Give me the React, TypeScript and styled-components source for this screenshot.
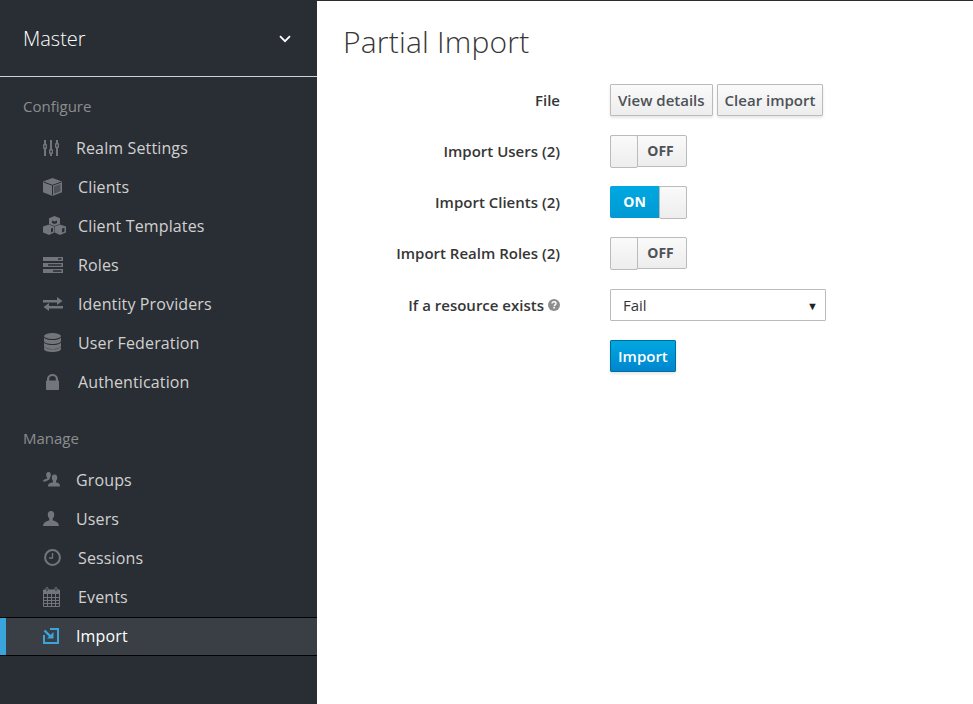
import React from 'react'
import styled, { createGlobalStyle } from 'styled-components'

const GlobalStyle = createGlobalStyle`
  html, body {
    margin: 0;
    padding: 0;
    height: 100%;
    background: #fff;
    font-family: 'Open Sans', 'Liberation Sans', sans-serif;
  }
  * { box-sizing: border-box; }
`

const iconColor = '#72767b'
const sidebarColor = '#292e34'

const SlidersIcon = () => (
  <svg width='16' height='16' viewBox='0 0 16 16' fill={iconColor}>
    <rect x='1' y='0' width='2' height='16' />
    <rect x='7' y='0' width='2' height='16' />
    <rect x='13' y='0' width='2' height='16' />
    <rect x='0' y='4' width='4' height='5' rx='1' />
    <rect x='6' y='9' width='4' height='5' rx='1' />
    <rect x='12' y='3' width='4' height='5' rx='1' />
    <rect x='1.300' y='5.500' width='1.400' height='2' fill={sidebarColor} />
    <rect x='7.300' y='10.500' width='1.400' height='2' fill={sidebarColor} />
    <rect x='13.300' y='4.500' width='1.400' height='2' fill={sidebarColor} />
  </svg>
)

const CubeIcon = () => (
  <svg width='19' height='18' viewBox='0 0 19 18'>
    <path d='M9.500 0 19 3.500V14.300L9.500 18 0 14.300V3.500Z' fill={iconColor} />
    <path d='M.5 4 9.500 7.300 18.500 4M9.500 7.300V17.500' fill='none' stroke={sidebarColor} strokeWidth='1' />
    <path d='M11 8.500 17.500 6V13.300L11 15.800Z' fill='#4d5258' />
  </svg>
)

const CubesIcon = () => (
  <svg width='23' height='19' viewBox='0 0 23 19' fill={iconColor}>
    <path d='M11.500 0 17 2.200V8L11.500 10 6 8V2.200Z' />
    <path d='M6 8.500 11.300 10.600V16.600L6 19 0 16.600V10.600Z' />
    <path d='M17 8.500 23 10.600V16.600L17 19 11.700 16.600V10.600Z' />
    <path d='M9 4.500 11.500 5.400 14 4.500V7L11.500 8 9 7Z' fill={sidebarColor} />
    <path d='M8 12.500 10 11.700V15.500L8 16.400Z' fill={sidebarColor} />
    <path d='M19 12.500 21.500 11.700V15.500L19 16.400Z' fill={sidebarColor} />
  </svg>
)

const ServerIcon = () => (
  <svg width='20' height='16' viewBox='0 0 20 16' fill={iconColor}>
    <path fillRule='evenodd' d='M0 0H20V4H0ZM15 1.300V2.700H18.500V1.300Z' />
    <path fillRule='evenodd' d='M0 6H20V10H0ZM5 7.300V8.700H18.500V7.300Z' />
    <path fillRule='evenodd' d='M0 12H20V16H0ZM10 13.300V14.700H18.500V13.300Z' />
  </svg>
)

const ExchangeIcon = () => (
  <svg width='20' height='14' viewBox='0 0 20 14' fill={iconColor}>
    <path d='M0 3H14V0L19.500 4 14 8V5.500H0Z' />
    <path d='M20 9H6V6L.5 10 6 14V11.500H20Z' />
  </svg>
)

const DatabaseIcon = () => (
  <svg width='17' height='19' viewBox='0 0 17 19' fill={iconColor}>
    <ellipse cx='8.500' cy='3' rx='8.500' ry='3' />
    <path d='M0 4.700C1.500 6.300 5 7 8.500 7S15.500 6.300 17 4.700V8C17 9.700 13.200 11 8.500 11S0 9.700 0 8Z' />
    <path d='M0 9.700C1.500 11.300 5 12 8.500 12S15.500 11.300 17 9.700V13C17 14.700 13.200 16 8.500 16S0 14.700 0 13Z' />
    <path d='M0 13.900C1.500 15.500 5 16.300 8.500 16.300S15.500 15.500 17 13.900V16C17 17.700 13.200 19 8.500 19S0 17.700 0 16Z' />
  </svg>
)

const LockIcon = () => (
  <svg width='13' height='16' viewBox='0 0 13 16' fill={iconColor}>
    <path fillRule='evenodd' d='M1 6.500V5A5.500 5 0 0 1 12 5V6.500H12.200A.8.8 0 0 1 13 7.300V15.200A.8.8 0 0 1 12.200 16H.8A.8.8 0 0 1 0 15.200V7.300A.8.8 0 0 1 .8 6.500ZM3.200 6.500H9.800V5A3.300 3 0 0 0 3.200 5Z' />
  </svg>
)

const GroupIcon = () => (
  <svg width='17' height='15' viewBox='0 0 17 15' fill={iconColor}>
    <path d='M5.500 0C7.300 0 8 1.500 7.800 3.200 7.700 4.500 7.200 5.300 6.700 5.900V7.200L5 8.300 2.500 9.600H0C0 8 .8 7.500 2.500 7L4.200 6.400V5.800C3.600 5.200 3.300 4.400 3.200 3.200 3 1.500 3.700 0 5.500 0Z' />
    <path d='M11.500 2.500C13.500 2.500 14.400 4 14.200 5.900 14.100 7.300 13.600 8.200 13 8.800V10.200L15 11C16.500 11.600 17 12.600 17 14.500H5C5 12.600 5.700 11.600 7.200 11L10 10.200V8.800C9.400 8.200 8.900 7.300 8.800 5.900 8.600 4 9.500 2.500 11.500 2.500Z' />
  </svg>
)

const UserIcon = () => (
  <svg width='16' height='15' viewBox='0 0 16 15' fill={iconColor}>
    <path d='M8 0C10.400 0 11.500 1.800 11.200 4 11 5.800 10.400 6.900 9.700 7.600V9.200L12.800 10.400C14.800 11.200 15.700 12.500 16 15H0C.3 12.500 1.200 11.200 3.200 10.400L6.300 9.200V7.600C5.600 6.900 5 5.800 4.800 4 4.500 1.800 5.600 0 8 0Z' />
  </svg>
)

const ClockIcon = () => (
  <svg width='17' height='17' viewBox='0 0 17 17' fill='none' stroke={iconColor}>
    <circle cx='8.500' cy='8.500' r='7.400' strokeWidth='2' />
    <path d='M8.500 4V9H5' strokeWidth='1.300' />
  </svg>
)

const CalendarIcon = () => (
  <svg width='17' height='20' viewBox='0 0 17 20' fill='none' stroke={iconColor}>
    <path d='M.5 3H16.500V19.500H.5Z' />
    <path d='M0 3H17V7H0Z' fill={iconColor} stroke='none' />
    <path d='M.5 10.500H16.500M.5 13.500H16.500M.5 16.500H16.500M4.500 7V19.500M8.500 7V19.500M12.500 7V19.500' />
    <rect x='3' y='0.500' width='2' height='4' rx='1' fill={sidebarColor} />
    <rect x='12' y='0.500' width='2' height='4' rx='1' fill={sidebarColor} />
  </svg>
)

const ImportIcon = () => (
  <svg width='16' height='16' viewBox='0 0 16 16' fill='none' stroke='#39a5dc'>
    <path d='M7 1H15V15H1V7' strokeWidth='2' />
    <path d='M1.500 2.500 8 9' strokeWidth='2.400' />
    <path d='M4 10.500H10.500V4Z' fill='#39a5dc' stroke='none' />
  </svg>
)

const HelpIcon = () => (
  <svg width='12' height='12' viewBox='0 0 12 12'>
    <circle cx='6' cy='6' r='6' fill='#8b8d8f' />
    <path d='M4 4.600C4 3.400 4.900 2.800 6 2.800S8 3.500 8 4.500C8 5.900 6.200 5.800 6.200 7.200' fill='none' stroke='#fff' strokeWidth='1.400' />
    <rect x='5.300' y='8' width='1.600' height='1.500' fill='#fff' />
  </svg>
)

const configureItems = [
  { label: 'Realm Settings', icon: <SlidersIcon />, gap: 17, inset: 0 },
  { label: 'Clients', icon: <CubeIcon />, gap: 16, inset: 0 },
  { label: 'Client Templates', icon: <CubesIcon />, gap: 12, inset: 0 },
  { label: 'Roles', icon: <ServerIcon />, gap: 15, inset: 0 },
  { label: 'Identity Providers', icon: <ExchangeIcon />, gap: 15, inset: 0 },
  { label: 'User Federation', icon: <DatabaseIcon />, gap: 17, inset: 1 },
  { label: 'Authentication', icon: <LockIcon />, gap: 19, inset: 3 },
]

const manageItems = [
  { label: 'Groups', icon: <GroupIcon />, gap: 16, inset: 0 },
  { label: 'Users', icon: <UserIcon />, gap: 17, inset: 0 },
  { label: 'Sessions', icon: <ClockIcon />, gap: 17, inset: 1 },
  { label: 'Events', icon: <CalendarIcon />, gap: 18, inset: 0 },
]

function App() {
  return (
    <Page>
      <GlobalStyle />
      <Sidebar>
        <RealmHeader>
          <RealmName>Master</RealmName>
          <svg width='12' height='8' viewBox='0 0 12 8' fill='none' stroke='#fff' strokeWidth='1.800'>
            <path d='M1 1.200 6 6.200 11 1.200' />
          </svg>
        </RealmHeader>
        <SectionTitle>Configure</SectionTitle>
        <NavList>
          {configureItems.map((item) => (
            <NavItem key={item.label}>
              <IconSlot $inset={item.inset}>{item.icon}</IconSlot>
              <NavLabel $gap={item.gap}>{item.label}</NavLabel>
            </NavItem>
          ))}
        </NavList>
        <SectionTitle $spaced>Manage</SectionTitle>
        <NavList>
          {manageItems.map((item) => (
            <NavItem key={item.label}>
              <IconSlot $inset={item.inset}>{item.icon}</IconSlot>
              <NavLabel $gap={item.gap}>{item.label}</NavLabel>
            </NavItem>
          ))}
          <NavItem $active>
            <IconSlot $inset={0}>
              <ImportIcon />
            </IconSlot>
            <NavLabel $gap={17} $active>
              Import
            </NavLabel>
          </NavItem>
        </NavList>
      </Sidebar>
      <Main>
        <Title>Partial Import</Title>
        <Form>
          <Label>File</Label>
          <Controls>
            <Button>View details</Button>
            <Button>Clear import</Button>
          </Controls>
          <Label>Import Users (2)</Label>
          <Controls>
            <Toggle>
              <Knob />
              <OffText>OFF</OffText>
            </Toggle>
          </Controls>
          <Label>Import Clients (2)</Label>
          <Controls>
            <Toggle>
              <OnText>ON</OnText>
              <Knob $on />
            </Toggle>
          </Controls>
          <Label>Import Realm Roles (2)</Label>
          <Controls>
            <Toggle>
              <Knob />
              <OffText>OFF</OffText>
            </Toggle>
          </Controls>
          <Label>
            If a resource exists
            <HelpSlot>
              <HelpIcon />
            </HelpSlot>
          </Label>
          <Controls $pushed>
            <SelectBox>
              Fail
              <Caret>▼</Caret>
            </SelectBox>
          </Controls>
          <span />
          <Controls>
            <PrimaryButton>Import</PrimaryButton>
          </Controls>
        </Form>
      </Main>
    </Page>
  )
}

export default App

const Page = styled.div`
  display: flex;
  width: 973px;
  height: 704px;
  overflow: hidden;
  border-top: 1px solid #292e34;
`

const Sidebar = styled.aside`
  flex: 0 0 317px;
  background: #292e34;
  color: #fff;
`

const RealmHeader = styled.div`
  display: flex;
  align-items: center;
  justify-content: space-between;
  height: 76px;
  padding: 0 26px 0 23px;
  border-bottom: 1px solid #d1d1d1;
`

const RealmName = styled.div`
  font-size: 20px;
  font-weight: 300;
  color: #fff;
`

const SectionTitle = styled.div<{ $spaced?: boolean }>`
  font-size: 15px;
  line-height: 20px;
  color: #8b8d8f;
  padding-left: 23px;
  margin-top: ${(p) => (p.$spaced ? '27px' : '19px')};
  margin-bottom: 12px;
`

const NavList = styled.div`
  display: flex;
  flex-direction: column;
`

const NavItem = styled.div<{ $active?: boolean }>`
  display: flex;
  align-items: center;
  height: 39px;
  padding-left: 43px;
  ${(p) =>
    p.$active &&
    `
    margin-top: 1px;
    padding-bottom: 2px;
    background: #393f44;
    border-top: 1px solid #030303;
    border-bottom: 1px solid #030303;
    box-shadow: inset 6px 0 0 #39a5dc;
  `}
`

const IconSlot = styled.span<{ $inset: number }>`
  display: flex;
  align-items: center;
  margin-left: ${(p) => p.$inset}px;
`

const NavLabel = styled.span<{ $gap: number; $active?: boolean }>`
  margin-left: ${(p) => p.$gap}px;
  font-size: 16px;
  letter-spacing: 0.13px;
  color: ${(p) => (p.$active ? '#fff' : '#d1d1d1')};
`

const Main = styled.main`
  flex: 1;
  padding: 0 0 0 26px;
  background: #fff;
`

const Title = styled.h1`
  margin: 20px 0 22px;
  font-size: 30px;
  line-height: 41px;
  font-weight: 300;
  letter-spacing: 0.2px;
  color: #363636;
`

const Form = styled.div`
  display: grid;
  grid-template-columns: 217px 1fr;
  column-gap: 50px;
  row-gap: 19px;
  align-items: center;
`

const Label = styled.div`
  display: flex;
  align-items: center;
  justify-content: flex-end;
  font-size: 15px;
  font-weight: 600;
  color: #363636;
  white-space: nowrap;
`

const HelpSlot = styled.span`
  display: flex;
  margin-left: 4px;
`

const Controls = styled.div<{ $pushed?: boolean }>`
  display: flex;
  gap: 4px;
  height: 32px;
  margin-top: ${(p) => (p.$pushed ? '1px' : '0')};
`

const Button = styled.button`
  height: 32px;
  padding: 0 7px;
  font: 600 15px 'Open Sans', sans-serif;
  color: #4d5258;
  background: linear-gradient(#fafafa, #ededed);
  border: 1px solid #bbb;
  border-radius: 1px;
  box-shadow: 0 2px 3px rgba(3, 3, 3, 0.1);
`

const PrimaryButton = styled(Button)`
  color: #fff;
  background: linear-gradient(#00a8e1, #0085cf);
  border-color: #006e9c;
`

const Toggle = styled.div`
  display: flex;
  width: 77px;
  height: 32px;
  background: linear-gradient(#fafafa, #ededed);
  border: 1px solid #bbb;
  border-radius: 2px;
`

const Knob = styled.span<{ $on?: boolean }>`
  flex: 0 0 28px;
  margin: -1px ${(p) => (p.$on ? '-1px' : '0')} -1px ${(p) => (p.$on ? '0' : '-1px')};
  height: 33px;
  background: linear-gradient(#fafafa, #ededed);
  border: 1px solid #bbb;
  border-radius: 2px;
`

const OffText = styled.span`
  flex: 1;
  padding-right: 3px;
  text-align: center;
  font-size: 14px;
  font-weight: 700;
  line-height: 30px;
  color: #4d5258;
`

const OnText = styled.span`
  flex: 1;
  text-align: center;
  font-size: 14px;
  font-weight: 700;
  color: #fff;
  margin: -1px 0 -1px -1px;
  height: 32px;
  line-height: 32px;
  border-radius: 2px 0 0 2px;
  background: linear-gradient(#00a8e1, #0099d3);
`

const SelectBox = styled.div`
  display: flex;
  align-items: center;
  justify-content: space-between;
  width: 216px;
  height: 32px;
  padding: 0 7px 0 12px;
  font-size: 15px;
  color: #363636;
  background: #fff;
  border: 1px solid #bbb;
  border-radius: 1px;
`

const Caret = styled.span`
  font-size: 11px;
  color: #222;
`
